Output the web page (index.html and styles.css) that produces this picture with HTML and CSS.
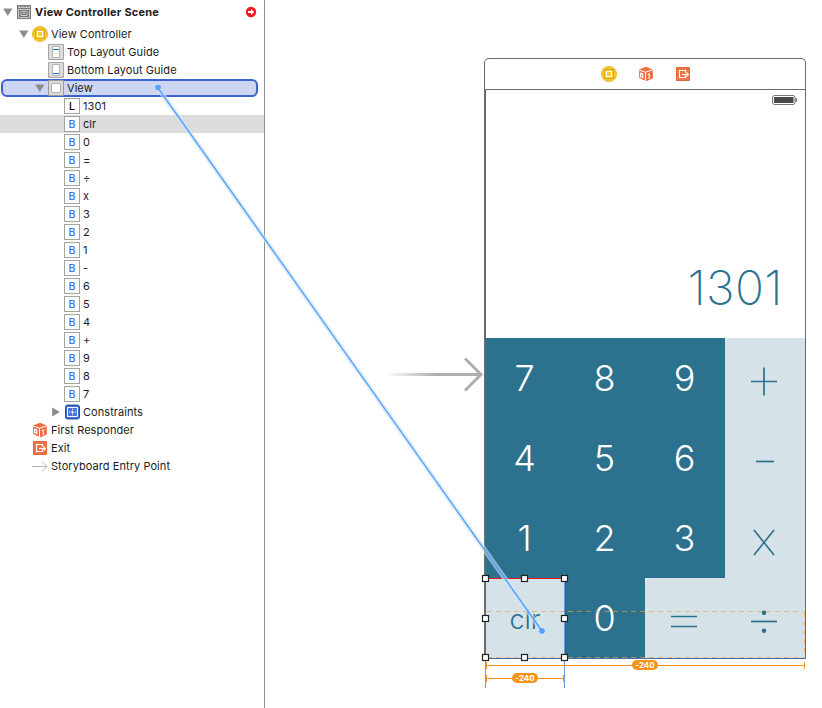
FILE: index.html
```html
<!DOCTYPE html>
<html lang="en">
<head>
<meta charset="utf-8">
<title>View Controller Scene</title>
<link rel="stylesheet" href="styles.css">
</head>
<body>
<svg class="defs" width="0" height="0">
  <defs>
    <symbol id="down" viewBox="0 0 16 16"><path d="M3.2 4.6h9.2L7.8 12z" fill="#8b8b8b"/></symbol>
    <symbol id="right" viewBox="0 0 16 16"><path d="M4.2 3.4v9.2L11.8 8z" fill="#8b8b8b"/></symbol>
    <symbol id="scene" viewBox="0 0 16 16">
      <path d="M1 1h14v14H1z" fill="#777"/>
      <path d="M2.5 1.5l1.5 1.5M6 1.5L7.5 3M9.500 1.500L11 3M12.500 1.500L14 3M2 3.500h12" stroke="#ddd" stroke-width=".8" fill="none"/>
      <path d="M2.500 5.500h11v8h-11zM5 7.500h6v4h-6zM7 9.500h2" stroke="#ccc" fill="none"/>
    </symbol>
    <symbol id="vc" viewBox="0 0 16 16">
      <circle cx="8" cy="8" r="7.600" fill="#f7ca2e" stroke="#e2ae1c" stroke-width=".8"/>
      <path d="M3.500 3.500h9v9h-9z" fill="none" stroke="#dca818"/>
      <path d="M5.500 5.500h5v5h-5z" fill="#f7ca2e" stroke="#fff" stroke-width="1.100"/>
    </symbol>
    <symbol id="top" viewBox="0 0 16 16">
      <path d="M.5.5h15v15H.5z" fill="#dcdcdc" stroke="#a5a5a5"/>
      <path d="M4.500 2.500h7v11h-7z" fill="#fff" stroke="#b4b4b4"/>
      <path d="M5 5.500h6" stroke="#2d6da4"/>
    </symbol>
    <symbol id="bottom" viewBox="0 0 16 16">
      <path d="M.5.5h15v15H.5z" fill="#dcdcdc" stroke="#a5a5a5"/>
      <path d="M4.500 2.500h7v11h-7z" fill="#fff" stroke="#b4b4b4"/>
      <path d="M5 11.500h6" stroke="#2d6da4"/>
    </symbol>
    <symbol id="view" viewBox="0 0 16 16">
      <path d="M.5.5h15v15H.5z" fill="#dcdcdc" stroke="#9b9b9b"/>
      <path d="M3.500 3.500h9v9h-9z" fill="#fff" stroke="#b4b4b4"/>
    </symbol>
    <symbol id="grid" viewBox="0 0 16 16">
      <rect x="1.500" y="1" width="14" height="14" rx="2" fill="#3f6cd0" stroke="#2851b4"/>
      <path d="M3.500 3.500h10v9h-10z" fill="#4a76d8" stroke="#fff"/>
      <path d="M5 8h7M8.500 4.800v6.400" stroke="#fff" stroke-dasharray="1.200 .8 3 .8"/>
    </symbol>
    <symbol id="cube" viewBox="0 0 16 16">
      <path d="M1 3.600L8 .8l6.800 2.600v9L8.200 15.200 1.200 12z" fill="#ec6f43"/>
      <path d="M1 4l6.600 2.200L14.800 3.800M7.500 6v9" fill="none" stroke="#fff" stroke-width="1"/>
      <path d="M2.600 7.200l2.200.8v3.500l-2.200-.9zM9.800 8.600l1.400-.6v5" fill="none" stroke="#fff" stroke-width="1.100"/>
    </symbol>
    <symbol id="exit" viewBox="0 0 16 16">
      <path d="M1.500 1.500h13v13h-13z" fill="#ee7549" stroke="#e4673a"/>
      <path d="M10.500 6.500v-2h-6v7h6v-2M7 8.500h6M11.500 6.500l2 2-2 2" fill="none" stroke="#fff" stroke-width="1.100"/>
    </symbol>
    <symbol id="entry" viewBox="0 0 16 16"><path d="M0 8.500h15M10 3.500l5 5-5 5" fill="none" stroke="#b5b5b5"/></symbol>
    <symbol id="stop" viewBox="0 0 12 12">
      <circle cx="6" cy="6" r="5.200" fill="#ee1c1c"/>
      <path d="M3 5h3V3l3.200 3L6 9V7H3z" fill="#fff"/>
    </symbol>
  </defs>
</svg>

<nav class="outline">
  <div class="row scene l0"><svg class="ic"><use href="#down"/></svg><svg class="ic"><use href="#scene"/></svg><span>View Controller Scene</span><svg class="stop"><use href="#stop"/></svg></div>
  <div class="row l1"><svg class="ic"><use href="#down"/></svg><svg class="ic"><use href="#vc"/></svg><span>View Controller</span></div>
  <div class="row l2"><i class="ic"></i><svg class="ic"><use href="#top"/></svg><span>Top Layout Guide</span></div>
  <div class="row l2"><i class="ic"></i><svg class="ic"><use href="#bottom"/></svg><span>Bottom Layout Guide</span></div>
  <div class="row l2 target"><svg class="ic"><use href="#down"/></svg><svg class="ic"><use href="#view"/></svg><span>View</span></div>
  <div class="row l3"><i class="ic"></i><b class="tag label">L</b><span>1301</span></div>
  <div class="row l3 selected"><i class="ic"></i><b class="tag">B</b><span>clr</span></div>
  <div class="row l3"><i class="ic"></i><b class="tag">B</b><span>0</span></div>
  <div class="row l3"><i class="ic"></i><b class="tag">B</b><span>=</span></div>
  <div class="row l3"><i class="ic"></i><b class="tag">B</b><span>÷</span></div>
  <div class="row l3"><i class="ic"></i><b class="tag">B</b><span>x</span></div>
  <div class="row l3"><i class="ic"></i><b class="tag">B</b><span>3</span></div>
  <div class="row l3"><i class="ic"></i><b class="tag">B</b><span>2</span></div>
  <div class="row l3"><i class="ic"></i><b class="tag">B</b><span>1</span></div>
  <div class="row l3"><i class="ic"></i><b class="tag">B</b><span>-</span></div>
  <div class="row l3"><i class="ic"></i><b class="tag">B</b><span>6</span></div>
  <div class="row l3"><i class="ic"></i><b class="tag">B</b><span>5</span></div>
  <div class="row l3"><i class="ic"></i><b class="tag">B</b><span>4</span></div>
  <div class="row l3"><i class="ic"></i><b class="tag">B</b><span>+</span></div>
  <div class="row l3"><i class="ic"></i><b class="tag">B</b><span>9</span></div>
  <div class="row l3"><i class="ic"></i><b class="tag">B</b><span>8</span></div>
  <div class="row l3"><i class="ic"></i><b class="tag">B</b><span>7</span></div>
  <div class="row l3"><svg class="ic"><use href="#right"/></svg><svg class="ic"><use href="#grid"/></svg><span>Constraints</span></div>
  <div class="row l1"><i class="ic"></i><svg class="ic"><use href="#cube"/></svg><span>First Responder</span></div>
  <div class="row l1"><i class="ic"></i><svg class="ic"><use href="#exit"/></svg><span>Exit</span></div>
  <div class="row l1"><i class="ic"></i><svg class="ic"><use href="#entry"/></svg><span>Storyboard Entry Point</span></div>
</nav>

<main class="canvas">
  <section class="device">
    <header class="dock">
      <svg class="ic"><use href="#vc"/></svg>
      <svg class="ic"><use href="#cube"/></svg>
      <svg class="ic"><use href="#exit"/></svg>
    </header>
    <div class="display">
      <svg class="battery" width="26" height="10" viewBox="0 0 26 10">
        <rect x=".5" y=".5" width="22.500" height="9" rx="2" fill="#fff" stroke="#777"/>
        <rect x="2" y="2" width="19.500" height="6" rx=".5" fill="#4a4a4a"/>
        <path d="M24 3q1.200 2 0 4z" fill="#555" stroke="#555" stroke-width=".6"/>
      </svg>
      <output>1301</output>
    </div>
    <div class="keys">
      <div class="key">7</div><div class="key">8</div><div class="key">9</div>
      <div class="key op"><svg width="30" height="30"><path d="M2 15.500h26M15 1.500v28"/></svg></div>
      <div class="key">4</div><div class="key">5</div><div class="key">6</div>
      <div class="key op"><svg width="30" height="30"><path d="M7 15.500h18"/></svg></div>
      <div class="key">1</div><div class="key">2</div><div class="key">3</div>
      <div class="key op"><svg width="30" height="30"><path d="M5 4l20 25M25 4L5 29"/></svg></div>
      <div class="key op clr">clr</div><div class="key">0</div>
      <div class="key op"><svg width="30" height="30"><path d="M2 10.500h26M2 20.500h26"/></svg></div>
      <div class="key op"><svg width="30" height="30"><path d="M2 15.500h26"/><circle cx="15" cy="6.700" r="2.300"/><circle cx="15" cy="24.700" r="2.300"/></svg></div>
    </div>
  </section>
</main>

<svg class="overlay" width="822" height="708" viewBox="0 0 822 708">
  <defs>
    <linearGradient id="fade" gradientUnits="userSpaceOnUse" x1="386" y1="0" x2="436" y2="0"><stop offset="0" stop-color="#aeaeae" stop-opacity="0"/><stop offset="1" stop-color="#aeaeae"/></linearGradient>
  </defs>
  <rect x="386" y="373" width="95" height="3" fill="url(#fade)"/>
  <path d="M465 358.500l16 16-16 16" class="entry-head"/>

  <path d="M485.500 90v568" class="edge"/>
  <path d="M485 658.500h321" class="edge"/>
  <path d="M487 611.500h317M487 657.500h317M804.500 612v45" class="dash"/>
  <path d="M486 578.500h80M565.500 578v80" class="conflict"/>
  <path d="M485.500 660v28M564.500 574v114" class="guide"/>
  <path d="M486.500 662v7M487 665.500h317M804.500 662v7M486.500 675v7M487 678.500h76M563.500 675v7" class="measure"/>
  <rect x="632" y="660" width="26" height="10" rx="5" class="pill"/>
  <text x="645" y="668.200" class="num">-240</text>
  <rect x="512" y="673" width="26" height="10" rx="5" class="pill"/>
  <text x="525" y="681.200" class="num">-240</text>

  <g class="drag">
    <path d="M158 88L542 631" class="halo"/>
    <circle cx="542" cy="631" r="3.500" class="halo-dot"/>
    <path d="M158 88L542 631" class="line"/>
    <circle cx="158" cy="87.500" r="2.800"/>
    <circle cx="542" cy="631" r="2.800"/>
  </g>
  <g class="handles">
    <rect x="482.500" y="575.500" width="6" height="6"/><rect x="521.500" y="575.500" width="6" height="6"/><rect x="561.500" y="575.500" width="6" height="6"/>
    <rect x="482.500" y="615.500" width="6" height="6"/><rect x="561.500" y="615.500" width="6" height="6"/>
    <rect x="482.500" y="654.500" width="6" height="6"/><rect x="521.500" y="654.500" width="6" height="6"/><rect x="561.500" y="654.500" width="6" height="6"/>
  </g>
</svg>
</body>
</html>
```
FILE: styles.css
```css
* { box-sizing: border-box; }
body {
  margin: 0;
  height: 708px;
  display: flex;
  position: relative;
  overflow: hidden;
  background: #fff;
  color: #1c1c1c;
  font-family: Inter, "Liberation Sans", sans-serif;
}
.defs { position: absolute; }

.outline {
  width: 265px;
  border-right: 1px solid #8f8f8f;
  font-size: 11px;
  letter-spacing: .06px;
}
.row { height: 18px; display: flex; align-items: center; }
.row span { margin-left: 3px; line-height: 18px; white-space: pre; }
.ic { width: 16px; height: 16px; flex: none; display: block; }
.l1 { padding-left: 16px; }
.l2 { padding-left: 32px; }
.l3 { padding-left: 48px; }
.scene { height: 25px; padding-bottom: 1px; font-weight: 700; letter-spacing: .22px; }
.stop { width: 12px; height: 12px; margin-left: auto; margin-right: 7px; }
.target {
  margin: 0 6px 0 1px;
  padding-left: 29px;
  border: 2px solid #3a62d2;
  border-radius: 6px;
  background: #cdd6f2;
}
.selected { background: #dcdcdc; }
.tag {
  width: 16px;
  height: 16px;
  flex: none;
  border: 1px solid #a3a3a3;
  background: #fff;
  color: #3c6ef0;
  font-size: 10.500px;
  font-weight: 500;
  line-height: 15px;
  text-align: center;
  letter-spacing: 0;
}
.label { color: #000; }

.canvas { flex: 1; padding: 58px 0 0 219px; }
.device {
  width: 322px;
  border: 1px solid #6b6b6b;
  border-bottom: 0;
  border-radius: 5px 5px 0 0;
}
.dock {
  height: 31px;
  border-bottom: 1px solid #6b6b6b;
  display: flex;
  justify-content: center;
  align-items: center;
  gap: 21px;
  padding-left: 2px;
}
.display {
  height: 248px;
  padding: 5px 7px 0;
  display: flex;
  flex-direction: column;
  align-items: flex-end;
}
.display output {
  margin: 153px 15px 0 0;
  color: #2c728f;
  font-size: 48px;
  font-weight: 250;
  line-height: 60px;
  letter-spacing: .4px;
}
.keys {
  display: grid;
  grid-template-columns: repeat(4, 80px);
  grid-auto-rows: 80px;
}
.key {
  display: flex;
  justify-content: center;
  align-items: center;
  padding-right: 1px;
  background: #2c718e;
  color: #fff;
  font-size: 36px;
  font-weight: 350;
}
.op { background: #d5e3e8; color: #2c718e; padding: 5px 2px 0 0; }
.op svg { fill: #2c718e; stroke: none; }
.op path { fill: none; stroke: #2c718e; stroke-width: 1.700; }
.clr { font-size: 27px; font-weight: 300; padding: 3px 0 0; }

.overlay { position: absolute; left: 0; top: 0; pointer-events: none; fill: none; }
.entry-head { stroke: #aeaeae; stroke-width: 3; }
.edge { stroke: #416fac; }
.dash { stroke: #f0a03c; stroke-opacity: .65; stroke-dasharray: 5 4; }
.guide { stroke: #7596d8; }
.conflict { stroke: #f3151a; }
.measure { stroke: #f7931a; }
.pill { fill: #f7931a; }
.num { fill: #fff; font-size: 8px; font-weight: 700; text-anchor: middle; }
.halo { stroke: #d3e3f8; stroke-opacity: .6; stroke-width: 5; }
.halo-dot { stroke: #d5e5fa; stroke-width: 2; }
.line { stroke: #55a2fb; stroke-width: 1.400; }
.drag circle { fill: #55a2fb; }
.handles { fill: #fff; stroke: #222; stroke-width: 1.200; }
```
